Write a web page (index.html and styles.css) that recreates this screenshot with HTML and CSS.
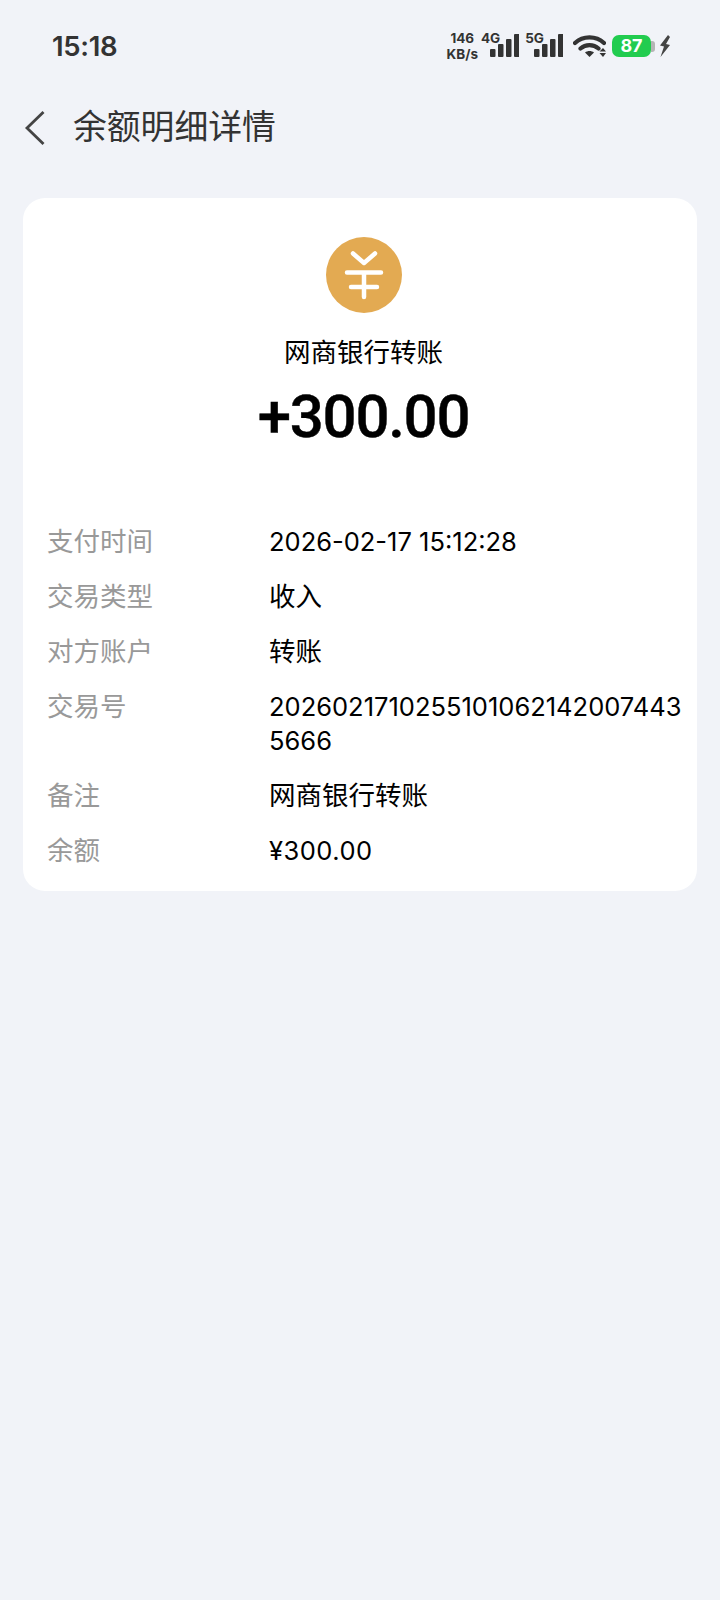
FILE: index.html
```html
<!DOCTYPE html>
<html lang="zh-CN">
<head>
<meta charset="utf-8">
<title>余额明细详情</title>
<link rel="stylesheet" href="styles.css">
</head>
<body>
<div class="status">
  <span class="time">15:18</span>
  <div class="status-icons">
    <span class="speed"><b>146</b><b>KB/s</b></span>
    <span class="net"><span class="net-label">4G</span>
      <svg class="bars" width="30" height="23" viewBox="0 0 30 23"><rect x="1" y="15" width="5.500" height="8" rx="1"/><rect x="9" y="10" width="5.500" height="13" rx="1"/><rect x="17" y="5" width="5.500" height="18" rx="1"/><rect x="25" y="0" width="5.500" height="23" rx="1"/></svg></span>
    <span class="net"><span class="net-label">5G</span>
      <svg class="bars" width="30" height="23" viewBox="0 0 30 23"><rect x="1" y="15" width="5.500" height="8" rx="1"/><rect x="9" y="10" width="5.500" height="13" rx="1"/><rect x="17" y="5" width="5.500" height="18" rx="1"/><rect x="25" y="0" width="5.500" height="23" rx="1"/></svg></span>
    <svg class="wifi" width="33" height="24" viewBox="0 0 33 24"><path d="M2 9C10 1.500 23 1.500 31 9M7.500 14.500C12.500 10 20.500 10 25.500 14.500" fill="none" stroke="#333" stroke-width="4.200" stroke-linecap="round"/><path d="M12 18.500C14.500 16.500 18.500 16.500 21 18.500L16.500 23Z" fill="#333"/><path d="M26.500 17.500l3.500-3.500 3 3.500ZM26.500 19l3.500 4 3-4Z" fill="#333"/></svg>
    <span class="battery"><span class="level">87</span><span class="cap"></span></span>
    <svg class="bolt" width="12" height="22" viewBox="0 0 12 22"><path d="M9 0 1 10.500l4 1L1.500 22 11 10l-4-1L11 2Z" fill="#444"/></svg>
  </div>
</div>
<header class="nav">
  <svg class="back" width="22" height="36" viewBox="0 0 22 36"><path d="M19.500 2 3 18 19.500 34" fill="none" stroke="#444" stroke-width="2.800"/></svg>
  <h1 class="title">余额明细详情</h1>
</header>
<main class="card">
  <div class="head">
    <svg class="logo" width="76" height="76" viewBox="0 0 76 76"><circle cx="38" cy="38" r="38" fill="#e3aa52"/><path d="M27 16.500 38 26 49 16.500M21 35.500H55M25 50H51M38 35.500V60" fill="none" stroke="#fff" stroke-width="4.500" stroke-linecap="round" stroke-linejoin="round"/></svg>
    <div class="name">网商银行转账</div>
    <div class="amount">+300.00</div>
  </div>
  <dl class="rows">
    <div class="row"><dt>支付时间</dt><dd class="num">2026-02-17 15:12:28</dd></div>
    <div class="row"><dt>交易类型</dt><dd>收入</dd></div>
    <div class="row"><dt>对方账户</dt><dd>转账</dd></div>
    <div class="row"><dt>交易号</dt><dd class="num">20260217102551010621420074435666</dd></div>
    <div class="row"><dt>备注</dt><dd>网商银行转账</dd></div>
    <div class="row"><dt>余额</dt><dd class="num balance">¥300.00</dd></div>
  </dl>
</main>
</body>
</html>
```
FILE: styles.css
```css
* { box-sizing: border-box; }
html, body { margin: 0; padding: 0; }
body {
  width: 720px;
  height: 1600px;
  overflow: hidden;
  background: #f1f3f8;
  font-family: Roboto, "Noto Sans CJK SC", sans-serif;
  color: #000;
}
.status {
  height: 92px;
  display: flex;
  align-items: center;
  justify-content: space-between;
  padding: 0 52px;
  color: #333;
}
.time { font-family: Inter, sans-serif; font-size: 27.500px; font-weight: 600; letter-spacing: -0.3px; }
.status-icons { display: flex; align-items: center; margin-right: -3px; }
.speed {
  display: flex; flex-direction: column; align-items: center;
  font-family: Inter, sans-serif; font-size: 13.500px; line-height: 16px; color: #333;
  margin-right: 3px;
}
.net { display: flex; align-items: flex-start; height: 30px; margin-right: 6px; }
.net-label { font-family: Inter, sans-serif; font-weight: 700; font-size: 13.500px; line-height: 15px; margin-right: -11px; }
.bars { fill: #333; margin-top: 3px; }
.wifi { margin: 0 1px 0 4px; }
.battery {
  display: flex; align-items: center;
  width: 44px; height: 22px; margin-left: 5px; margin-right: 3px;
}
.level {
  width: 39px; height: 22px; border-radius: 7px;
  background: #22cc4f; color: #fff;
  font-family: Inter, sans-serif; font-weight: 700; font-size: 18px; line-height: 22px; text-align: center;
}
.cap { width: 4px; height: 11px; background: #b5b5b5; border-radius: 0 3px 3px 0; }
.nav { height: 72px; display: flex; align-items: center; padding-left: 24px; }
.back { display: block; margin-top: 0; }
.title {
  margin: 0 0 0 27px;
  font-size: 33.800px; font-weight: 400; color: #333; line-height: 70px;
}
.card {
  margin: 34px 23px 0;
  height: 693px;
  background: #fff;
  border-radius: 22px;
  padding-top: 39px;
}
.head { display: flex; flex-direction: column; align-items: center; padding-left: 7px; }
.logo { display: block; }
.name { margin-top: 21px; font-size: 26.500px; line-height: 38px; }
.amount { margin-top: 10px; font-size: 60px; line-height: 70px; font-weight: 500; letter-spacing: -1.300px; -webkit-text-stroke: 0.4px #000; }
.rows { margin: 73px 0 0; padding: 0 10px 0 24px; display: flex; flex-direction: column; gap: 21.500px; }
.row { display: flex; }
dt { width: 222px; flex: none; color: #999; font-size: 26.500px; line-height: 33.500px; }
dd { margin: 0; flex: 1; min-width: 0; font-size: 26.500px; line-height: 33.500px; word-break: break-all; }
.num { font-family: Inter, sans-serif; font-size: 25.500px; }
.balance { letter-spacing: 0.5px; }
```
